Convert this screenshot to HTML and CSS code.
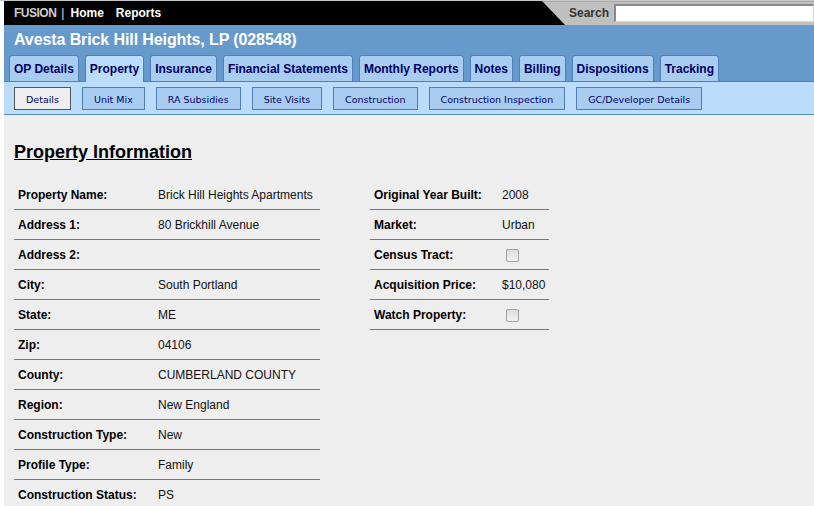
FILE: index.html
```html
<!DOCTYPE html>
<html>
<head>
<meta charset="utf-8">
<link rel="stylesheet" href="styles.css">
</head>
<body>
<div class="page">
  <div class="topbar">
    <nav class="topnav">
      <span class="brand">FUSION</span>
      <span class="sep">|</span>
      <a class="toplink">Home</a>
      <a class="toplink">Reports</a>
    </nav>
    <div class="search">
      <span class="search-label">Search</span>
      <input class="search-input" type="text">
    </div>
  </div>
  <div class="header">
    <h1 class="title">Avesta Brick Hill Heights, LP (028548)</h1>
    <div class="tabs">
      <a class="tab">OP Details</a>
      <a class="tab active">Property</a>
      <a class="tab">Insurance</a>
      <a class="tab">Financial Statements</a>
      <a class="tab">Monthly Reports</a>
      <a class="tab">Notes</a>
      <a class="tab">Billing</a>
      <a class="tab">Dispositions</a>
      <a class="tab">Tracking</a>
    </div>
  </div>
  <div class="subbar">
    <a class="subtab active">Details</a>
    <a class="subtab">Unit Mix</a>
    <a class="subtab">RA Subsidies</a>
    <a class="subtab">Site Visits</a>
    <a class="subtab">Construction</a>
    <a class="subtab">Construction Inspection</a>
    <a class="subtab">GC/Developer Details</a>
  </div>
  <div class="content">
    <h2 class="section-title">Property Information</h2>
    <div class="tables">
      <table class="info left">
        <tr><th>Property Name:</th><td>Brick Hill Heights Apartments</td></tr>
        <tr><th>Address 1:</th><td>80 Brickhill Avenue</td></tr>
        <tr><th>Address 2:</th><td></td></tr>
        <tr><th>City:</th><td>South Portland</td></tr>
        <tr><th>State:</th><td>ME</td></tr>
        <tr><th>Zip:</th><td>04106</td></tr>
        <tr><th>County:</th><td>CUMBERLAND COUNTY</td></tr>
        <tr><th>Region:</th><td>New England</td></tr>
        <tr><th>Construction Type:</th><td>New</td></tr>
        <tr><th>Profile Type:</th><td>Family</td></tr>
        <tr><th>Construction Status:</th><td>PS</td></tr>
      </table>
      <table class="info right">
        <tr><th>Original Year Built:</th><td>2008</td></tr>
        <tr><th>Market:</th><td>Urban</td></tr>
        <tr><th>Census Tract:</th><td><span class="checkbox"></span></td></tr>
        <tr><th>Acquisition Price:</th><td>$10,080</td></tr>
        <tr><th>Watch Property:</th><td><span class="checkbox"></span></td></tr>
      </table>
    </div>
  </div>
</div>
</body>
</html>
```

FILE: styles.css
```css
html, body {
  margin: 0;
  padding: 0;
  background: #ffffff;
  height: 100%;
  overflow: hidden;
}
body {
  font-family: "Liberation Sans", Arial, sans-serif;
  border-top: 1px solid #c8c8c8;
  padding-left: 4px;
}
.page {
  display: flex;
  flex-direction: column;
  min-height: 505px;
  background: #eeeeee;
}
.topbar {
  height: 24px;
  background: #000000;
  display: flex;
  justify-content: space-between;
  align-items: stretch;
}
.topnav {
  display: flex;
  align-items: center;
  padding-left: 10px;
  font-size: 12px;
  font-weight: bold;
}
.brand {
  color: #cfcfcf;
  letter-spacing: -0.5px;
}
.sep {
  color: #e0e0e0;
  font-weight: normal;
  margin: 0 6px 0 5px;
}
.toplink {
  color: #ffffff;
  margin-right: 12px;
}
.search {
  position: relative;
  width: 272px;
  display: flex;
  align-items: center;
  padding-left: 27px;
  box-sizing: border-box;
}
.search::before {
  content: "";
  position: absolute;
  inset: 0;
  background: #c0c0c0;
  border-top: 1px solid #a8a8a8;
  clip-path: polygon(0 0, 100% 0, 100% 100%, 23px 100%);
}
.search-label {
  position: relative;
  font-size: 12px;
  font-weight: bold;
  color: #333333;
  margin-right: 5px;
}
.search-input {
  position: relative;
  flex: 1;
  height: 18px;
  margin: 0;
  padding: 0;
  border: 1px solid #d8d8d8;
  border-top: 2px solid #8a8a8a;
  border-left: 2px solid #8a8a8a;
  background: #ffffff;
  box-sizing: border-box;
}
.header {
  background: #6699cc;
  padding-left: 5px;
}
.title {
  margin: 0;
  height: 30px;
  line-height: 30px;
  padding-left: 5px;
  font-size: 16px;
  font-weight: bold;
  color: #ffffff;
  letter-spacing: -0.1px;
}
.tabs {
  display: flex;
  gap: 6px;
  align-items: flex-end;
}
.tab {
  height: 25px;
  line-height: 26px;
  padding: 0 4px;
  background: #a8cdf0;
  border: 1px solid #4f7fb8;
  border-bottom: none;
  border-radius: 3px 3px 0 0;
  font-size: 12px;
  font-weight: bold;
  color: #000066;
}
.tab.active {
  background: #bcdcfc;
  height: 26px;
  margin-bottom: -1px;
  position: relative;
}
.subbar {
  background: #bcdcfc;
  border-top: 1px solid #4f7fb8;
  border-bottom: 1px solid #5b8fc7;
  height: 34px;
  display: flex;
  align-items: center;
  gap: 11px;
  padding-left: 10px;
  box-sizing: border-box;
}
.subtab {
  height: 23px;
  line-height: 23px;
  padding: 0 11px;
  background: #a8cdf0;
  border: 1px solid #4f7fb8;
  box-sizing: border-box;
  font-family: "DejaVu Sans", Verdana, sans-serif;
  font-size: 9.5px;
  color: #000066;
}
.subtab.active {
  background: #eeeeee;
  border-color: #555555;
}
.content {
  padding: 26px 0 0 10px;
}
.section-title {
  margin: 0 0 17px 0;
  font-size: 18px;
  font-weight: bold;
  text-decoration: underline;
  color: #000000;
  line-height: 22px;
}
.tables {
  display: flex;
  gap: 50px;
  align-items: flex-start;
}
.info {
  border-collapse: collapse;
  font-size: 12px;
}
.info th, .info td {
  height: 29px;
  padding: 0 0 0 4px;
  border-bottom: 1px solid #777777;
  text-align: left;
  vertical-align: middle;
}
.info th {
  font-weight: bold;
  color: #000000;
}
.info td {
  color: #111111;
}
.left th { width: 136px; }
.left td { width: 162px; }
.right th { width: 124px; }
.right td { width: 47px; }
.checkbox {
  display: inline-block;
  width: 11px;
  height: 11px;
  margin-left: 4px;
  border: 1px solid #a0a0a0;
  border-radius: 2px;
  background: linear-gradient(#dcdcdc, #f2f2f2);
  vertical-align: middle;
}
```
